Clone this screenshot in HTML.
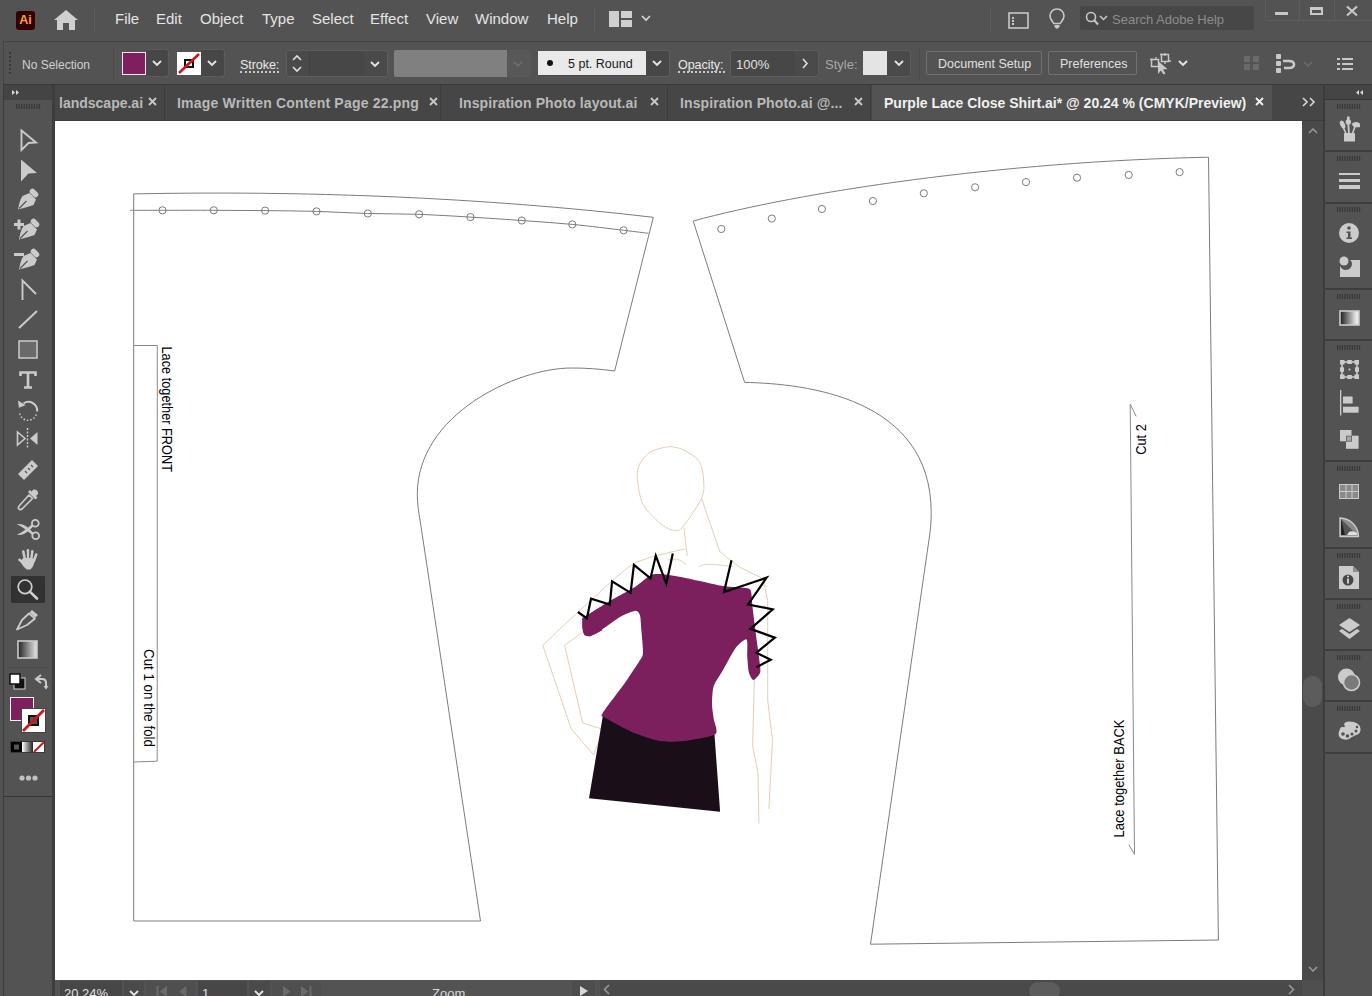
<!DOCTYPE html>
<html><head><meta charset="utf-8">
<style>
*{box-sizing:border-box;margin:0;padding:0}
html,body{width:1372px;height:996px;overflow:hidden;background:#535353;font-family:"Liberation Sans",sans-serif;color:#dcdcdc}
.a{position:absolute}
.menu span{position:absolute;top:10px;font-size:15px;color:#e4e4e4;line-height:18px}
.ctl{font-size:12px;color:#d8d8d8}
.tab{position:absolute;top:86px;height:35px;font-size:14px;font-weight:700;color:#b9b9b9;line-height:35px;white-space:nowrap}
.x{position:absolute;font-size:14px;color:#c8c8c8;top:0}
svg{position:absolute;overflow:visible}
</style></head><body>
<!-- MENU BAR -->
<div class="a" style="left:0;top:0;width:1372px;height:41px;background:#535353"></div>
<div class="a" style="left:16px;top:11px;width:19px;height:19px;background:#330000;border-radius:3px;color:#f7a04c;font-size:12.5px;font-weight:700;line-height:19px;text-align:center">Ai</div>
<svg style="left:54px;top:10px" width="24" height="20" viewBox="0 0 24 20"><path d="M12 0 L24 10 L21 10 L21 20 L15 20 L15 13 L9 13 L9 20 L3 20 L3 10 L0 10 Z" fill="#cfcfcf"/></svg>
<div class="a" style="left:94px;top:7px;width:1px;height:24px;background:#5f5f5f"></div>
<div class="menu">
<span style="left:115px">File</span><span style="left:156px">Edit</span><span style="left:200px">Object</span><span style="left:262px">Type</span><span style="left:312px">Select</span><span style="left:370px">Effect</span><span style="left:426px">View</span><span style="left:475px">Window</span><span style="left:547px">Help</span>
</div>
<div class="a" style="left:594px;top:7px;width:1px;height:24px;background:#5f5f5f"></div>

<!-- RIGHT MENU ICONS -->
<svg style="left:609px;top:11px" width="24" height="16" viewBox="0 0 24 16"><rect x="0" y="0" width="10" height="16" fill="#cfcfcf"/><rect x="12" y="0" width="11" height="7" fill="#cfcfcf"/><rect x="12" y="9" width="11" height="7" fill="#cfcfcf"/></svg>
<svg style="left:641px;top:15px" width="10" height="6" viewBox="0 0 10 6"><path d="M1 1 L5 5 L9 1" stroke="#d8d8d8" stroke-width="1.6" fill="none"/></svg>
<div class="a" style="left:990px;top:7px;width:1px;height:24px;background:#5f5f5f"></div>
<svg style="left:1008px;top:12px" width="21" height="17" viewBox="0 0 21 17"><rect x="1" y="1" width="19" height="15" stroke="#c8c8c8" stroke-width="1.6" fill="none"/><rect x="4" y="5" width="2" height="2" fill="#c8c8c8"/><rect x="4" y="8" width="2" height="2" fill="#c8c8c8"/><rect x="4" y="11" width="2" height="2" fill="#c8c8c8"/></svg>
<svg style="left:1049px;top:8px" width="16" height="22" viewBox="0 0 16 22"><path d="M8 1 C3.5 1 1 4.5 1 8 C1 11 3.5 13 4.8 15.5 L11.2 15.5 C12.5 13 15 11 15 8 C15 4.5 12.5 1 8 1 Z" stroke="#c8c8c8" stroke-width="1.6" fill="none"/><path d="M5.5 17 L10.5 17 L10.5 19 L8 21 L5.5 19 Z" fill="#c8c8c8"/></svg>
<div class="a" style="left:1080px;top:6px;width:174px;height:24px;background:#474747;border-radius:2px"></div>
<svg style="left:1085px;top:11px" width="24" height="15" viewBox="0 0 24 15"><circle cx="6" cy="6" r="4.5" stroke="#c8c8c8" stroke-width="1.6" fill="none"/><path d="M9 9 L13 13.5" stroke="#c8c8c8" stroke-width="2"/><path d="M15 5 L18.5 8.5 L22 5" stroke="#c8c8c8" stroke-width="1.5" fill="none"/></svg>
<div class="a" style="left:1112px;top:12px;font-size:13px;color:#8c8c8c;line-height:16px">Search Adobe Help</div>
<div class="a" style="left:1265px;top:-1px;width:108px;height:22px;border:1px solid #5e5e5e;border-radius:0 0 0 3px"></div>
<div class="a" style="left:1299px;top:0;width:1px;height:21px;background:#5e5e5e"></div>
<div class="a" style="left:1334px;top:0;width:1px;height:21px;background:#5e5e5e"></div>
<div class="a" style="left:1275px;top:12px;width:13px;height:3px;background:#c8c8c8"></div>
<div class="a" style="left:1310px;top:7px;width:13px;height:8px;border:2px solid #c8c8c8;border-top-width:3px"></div>
<svg style="left:1346px;top:6px" width="12" height="10" viewBox="0 0 12 10"><path d="M1 0.5 L11 9.5 M11 0.5 L1 9.5" stroke="#c8c8c8" stroke-width="2.2"/></svg>

<!-- CONTROL BAR -->
<div class="a" style="left:3px;top:41px;width:1369px;height:44px;background:#535353;border-top:1px solid #454545;border-left:1px solid #454545;border-bottom:1px solid #3a3a3a"></div>
<svg style="left:9px;top:52px" width="3" height="24" viewBox="0 0 3 24"><g fill="#3a3a3a"><rect x="0" y="0" width="2" height="2"/><rect x="0" y="4" width="2" height="2"/><rect x="0" y="8" width="2" height="2"/><rect x="0" y="12" width="2" height="2"/><rect x="0" y="16" width="2" height="2"/><rect x="0" y="20" width="2" height="2"/></g></svg>
<div class="a ctl" style="left:22px;top:58px;line-height:14px;color:#d0d0d0">No Selection</div>
<div class="a" style="left:113px;top:48px;width:1px;height:32px;background:#4a4a4a"></div>
<!-- fill -->
<div class="a" style="left:146px;top:50px;width:22px;height:26px;background:#474747;border-radius:0 2px 2px 0"></div>
<div class="a" style="left:122px;top:52px;width:24px;height:23px;background:#7f1f5e;border:1px solid #f4e4ee"></div>
<svg style="left:152px;top:60px" width="10" height="6" viewBox="0 0 10 6"><path d="M1 1 L5 5 L9 1" stroke="#e4e4e4" stroke-width="1.9" fill="none"/></svg>
<!-- stroke -->
<div class="a" style="left:201px;top:50px;width:23px;height:26px;background:#474747;border-radius:0 2px 2px 0"></div>
<div class="a" style="left:177px;top:52px;width:24px;height:23px;background:#fff"></div>
<svg style="left:177px;top:52px" width="24" height="23" viewBox="0 0 24 23"><rect x="8" y="8" width="8" height="7" stroke="#111" stroke-width="2" fill="none"/><path d="M2 21 L22 2" stroke="#d0141b" stroke-width="2.6"/></svg>
<svg style="left:207px;top:60px" width="10" height="6" viewBox="0 0 10 6"><path d="M1 1 L5 5 L9 1" stroke="#e4e4e4" stroke-width="1.9" fill="none"/></svg>
<div class="a ctl" style="left:240px;top:58px;font-size:12.6px;line-height:14px;color:#e8e8e8;letter-spacing:-0.1px">Stroke:</div>
<div class="a" style="left:240px;top:71px;width:39px;height:2px;border-top:2px dotted #c8c8c8"></div>
<!-- stroke weight -->
<div class="a" style="left:287px;top:51px;width:100px;height:25px;background:#4a4a4a;border-radius:2px"></div>
<div class="a" style="left:309px;top:51px;width:55px;height:25px;background:#474747"></div>
<div class="a" style="left:309px;top:51px;width:1px;height:25px;background:#424242"></div>
<svg style="left:291px;top:54px" width="12" height="19" viewBox="0 0 12 19"><path d="M2 6 L6 2 L10 6 M2 13 L6 17 L10 13" stroke="#e0e0e0" stroke-width="1.6" fill="none"/></svg>
<svg style="left:370px;top:61px" width="10" height="6" viewBox="0 0 10 6"><path d="M1 1 L5 5 L9 1" stroke="#e4e4e4" stroke-width="1.9" fill="none"/></svg>
<!-- profile -->
<div class="a" style="left:394px;top:50px;width:137px;height:27px;background:#585858;border-radius:2px"></div>
<div class="a" style="left:394px;top:50px;width:113px;height:27px;background:#808080;border-radius:2px 0 0 2px"></div>
<svg style="left:513px;top:61px" width="10" height="6" viewBox="0 0 10 6"><path d="M1 1 L5 5 L9 1" stroke="#6e6e6e" stroke-width="1.6" fill="none"/></svg>
<!-- brush -->
<div class="a" style="left:538px;top:51px;width:131px;height:25px;background:#474747;border-radius:2px"></div>
<div class="a" style="left:538px;top:51px;width:108px;height:24px;background:#e9e9e9"></div>
<div class="a" style="left:547px;top:60px;width:6px;height:6px;border-radius:50%;background:#111"></div>
<div class="a" style="left:568px;top:57px;font-size:12.5px;line-height:14px;color:#1a1a1a">5 pt. Round</div>
<svg style="left:652px;top:60px" width="10" height="6" viewBox="0 0 10 6"><path d="M1 1 L5 5 L9 1" stroke="#e4e4e4" stroke-width="1.9" fill="none"/></svg>
<!-- opacity -->
<div class="a ctl" style="left:678px;top:58px;font-size:12.6px;line-height:14px;color:#e8e8e8;letter-spacing:-0.1px">Opacity:</div>
<div class="a" style="left:678px;top:71px;width:47px;height:2px;border-top:2px dotted #c8c8c8"></div>
<div class="a" style="left:731px;top:51px;width:87px;height:25px;background:#4a4a4a;border-radius:2px"></div>
<div class="a" style="left:731px;top:51px;width:64px;height:25px;background:#474747"></div>
<div class="a ctl" style="left:736px;top:58px;font-size:13px;line-height:14px;color:#e0e0e0">100%</div>
<svg style="left:802px;top:58px" width="6" height="11" viewBox="0 0 6 11"><path d="M1 1 L5 5.5 L1 10" stroke="#e0e0e0" stroke-width="1.6" fill="none"/></svg>
<div class="a ctl" style="left:825px;top:58px;font-size:13px;line-height:14px;color:#a8a8a8">Style:</div>
<div class="a" style="left:887px;top:51px;width:24px;height:25px;background:#4a4a4a;border-radius:0 2px 2px 0"></div>
<div class="a" style="left:863px;top:51px;width:24px;height:24px;background:#e4e4e4"></div>
<svg style="left:894px;top:60px" width="10" height="6" viewBox="0 0 10 6"><path d="M1 1 L5 5 L9 1" stroke="#e4e4e4" stroke-width="1.9" fill="none"/></svg>
<div class="a" style="left:919px;top:48px;width:1px;height:32px;background:#4a4a4a"></div>
<div class="a" style="left:926px;top:51px;width:116px;height:24px;border:1px solid #707070;border-radius:2px"></div>
<div class="a ctl" style="left:938px;top:57px;font-size:12.5px;line-height:14px;color:#e0e0e0">Document Setup</div>
<div class="a" style="left:1048px;top:51px;width:89px;height:24px;border:1px solid #707070;border-radius:2px"></div>
<div class="a ctl" style="left:1060px;top:57px;font-size:12.5px;line-height:14px;color:#e0e0e0">Preferences</div>


<div class="a" style="left:286px;top:50px;width:102px;height:27px;border:1px solid #5c5c5c;border-radius:3px"></div>
<div class="a" style="left:730px;top:50px;width:89px;height:27px;border:1px solid #5c5c5c;border-radius:3px"></div>
<div class="a" style="left:645px;top:50px;width:25px;height:27px;border:1px solid #5c5c5c;border-left:none;border-radius:0 3px 3px 0"></div>
<div class="a" style="left:146px;top:49px;width:23px;height:28px;border:1px solid #5c5c5c;border-left:none;border-radius:0 3px 3px 0"></div>
<div class="a" style="left:201px;top:49px;width:24px;height:28px;border:1px solid #5c5c5c;border-left:none;border-radius:0 3px 3px 0"></div>
<div class="a" style="left:887px;top:50px;width:24px;height:27px;border:1px solid #5c5c5c;border-left:none;border-radius:0 3px 3px 0"></div>
<!-- right icons control bar -->
<svg style="left:1150px;top:53px" width="22" height="22" viewBox="0 0 22 22"><rect x="1.5" y="6.5" width="7" height="7" stroke="#c8c8c8" stroke-width="1.5" fill="none"/><rect x="11.5" y="1.5" width="7" height="7" stroke="#c8c8c8" stroke-width="1.5" fill="none"/><path d="M0 6.5 L3 6.5 M6 4 L6 7 M10 1.5 L13 1.5 M15 0 L15 3 M18.5 8 L21 8 M15 8 L15 11" stroke="#c8c8c8" stroke-width="1.3"/><path d="M8 8 L8 21 L11 17.5 L13.5 21.5 L15.5 20.5 L13 16.5 L17.5 16 Z" fill="#c8c8c8"/></svg>
<svg style="left:1178px;top:60px" width="10" height="6" viewBox="0 0 10 6"><path d="M1 1 L5 5 L9 1" stroke="#e4e4e4" stroke-width="1.9" fill="none"/></svg>
<svg style="left:1243px;top:55px" width="17" height="16" viewBox="0 0 17 16"><g fill="#6a6a6a"><rect x="1" y="1" width="6" height="6"/><rect x="10" y="1" width="6" height="6"/><rect x="1" y="9" width="6" height="6"/><rect x="10" y="9" width="6" height="6"/></g><path d="M8.5 0 L8.5 16 M0 8 L17 8" stroke="#575757" stroke-width="1.2"/></svg>
<svg style="left:1276px;top:54px" width="20" height="19" viewBox="0 0 20 19"><g fill="#c8c8c8"><rect x="0" y="0" width="5" height="5" rx="1"/><rect x="0" y="7" width="5" height="5" rx="1"/><rect x="0" y="14" width="5" height="5" rx="1"/></g><path d="M7 7 L13 7 C17 7 18 9 18 10.5 C18 12 17 14 13 14 L8 14" stroke="#c8c8c8" stroke-width="2.6" fill="none"/></svg>
<svg style="left:1303px;top:61px" width="10" height="6" viewBox="0 0 10 6"><path d="M1 1 L5 5 L9 1" stroke="#6e6e6e" stroke-width="1.5" fill="none"/></svg>
<svg style="left:1337px;top:58px" width="16" height="12" viewBox="0 0 16 12"><g fill="#c8c8c8"><rect x="0" y="0" width="3" height="2"/><rect x="5" y="0" width="11" height="2"/><rect x="0" y="5" width="3" height="2"/><rect x="5" y="5" width="11" height="2"/><rect x="0" y="10" width="3" height="2"/><rect x="5" y="10" width="11" height="2"/></g></svg>

<!-- TAB BAR -->
<div class="a" style="left:55px;top:85px;width:1268px;height:36px;background:#464646"></div>
<div class="a" style="left:164px;top:85px;width:1px;height:36px;background:#3c3c3c"></div>
<div class="a" style="left:440px;top:85px;width:1px;height:36px;background:#3c3c3c"></div>
<div class="a" style="left:667px;top:85px;width:1px;height:36px;background:#3c3c3c"></div>
<div class="a" style="left:870px;top:85px;width:1px;height:36px;background:#3c3c3c"></div>
<div class="a" style="left:872px;top:85px;width:400px;height:35px;background:#535353"></div>
<div class="tab" style="left:59px">landscape.ai</div>
<div class="tab" style="left:177px;letter-spacing:0.2px">Image Written Content Page 22.png</div>
<div class="tab" style="left:459px;letter-spacing:0.1px">Inspiration Photo layout.ai</div>
<div class="tab" style="left:680px;letter-spacing:0.1px">Inspiration Photo.ai @...</div>
<div class="tab" style="left:884px;color:#f0f0f0">Purple Lace Close Shirt.ai* @ 20.24 % (CMYK/Preview)</div>
<svg style="left:148px;top:97px" width="9" height="9" viewBox="0 0 9 9"><path d="M1 1 L8 8 M8 1 L1 8" stroke="#c8c8c8" stroke-width="1.8"/></svg>
<svg style="left:429px;top:97px" width="9" height="9" viewBox="0 0 9 9"><path d="M1 1 L8 8 M8 1 L1 8" stroke="#c8c8c8" stroke-width="1.8"/></svg>
<svg style="left:650px;top:97px" width="9" height="9" viewBox="0 0 9 9"><path d="M1 1 L8 8 M8 1 L1 8" stroke="#c8c8c8" stroke-width="1.8"/></svg>
<svg style="left:854px;top:97px" width="9" height="9" viewBox="0 0 9 9"><path d="M1 1 L8 8 M8 1 L1 8" stroke="#c8c8c8" stroke-width="1.8"/></svg>
<svg style="left:1255px;top:97px" width="9" height="9" viewBox="0 0 9 9"><path d="M1 1 L8 8 M8 1 L1 8" stroke="#f0f0f0" stroke-width="1.8"/></svg>
<svg style="left:1302px;top:97px" width="14" height="10" viewBox="0 0 14 10"><path d="M1 1 L5 5 L1 9 M8 1 L12 5 L8 9" stroke="#d8d8d8" stroke-width="1.6" fill="none"/></svg>

<div class="a" style="left:55px;top:120px;width:1268px;height:1px;background:#3d3d3d"></div>
<!-- LEFT TOOLBAR -->
<div class="a" style="left:0;top:85px;width:3px;height:911px;background:#535353"></div>
<div class="a" style="left:3px;top:85px;width:1px;height:911px;background:#3c3c3c"></div>
<div class="a" style="left:4px;top:85px;width:48px;height:15px;background:#444444"></div>
<svg style="left:12px;top:90px" width="8" height="5" viewBox="0 0 8 5"><path d="M0 0 L3 2.5 L0 5 Z M4 0 L7 2.5 L4 5 Z" fill="#d8d8d8"/></svg>
<div class="a" style="left:4px;top:100px;width:48px;height:896px;background:#535353"></div>
<div class="a" style="left:52px;top:85px;width:3px;height:911px;background:#3e3e3e"></div>
<div class="a" style="left:4px;top:796px;width:48px;height:1px;background:#363636"></div>

<!-- TOOLS -->
<svg style="left:15.5px;top:104px" width="25" height="5" viewBox="0 0 25 5"><g fill="#363636"><rect x="0.00" y="0" width="1.1" height="5"/><rect x="2.55" y="0" width="1.1" height="5"/><rect x="5.10" y="0" width="1.1" height="5"/><rect x="7.65" y="0" width="1.1" height="5"/><rect x="10.20" y="0" width="1.1" height="5"/><rect x="12.75" y="0" width="1.1" height="5"/><rect x="15.30" y="0" width="1.1" height="5"/><rect x="17.85" y="0" width="1.1" height="5"/><rect x="20.40" y="0" width="1.1" height="5"/><rect x="22.95" y="0" width="1.1" height="5"/></g></svg>
<svg style="left:20px;top:129px" width="18" height="23" viewBox="0 0 18 23"><path d="M1.5 1.5 L16 13.5 L8.5 14 L1.5 21 Z" stroke="#cbcbcb" stroke-width="1.9" fill="none" stroke-linejoin="miter"/></svg>
<svg style="left:20px;top:159px" width="18" height="23" viewBox="0 0 18 23"><path d="M1 0.5 L17 14 L8.5 14.5 L1 22.5 Z" fill="#cbcbcb"/></svg>
<svg style="left:17px;top:188px" width="23" height="23" viewBox="0 0 23 23"><g transform="translate(0,0)"><path d="M15.5 3.5 L18.5 6.5" stroke="#cbcbcb" stroke-width="5.5" stroke-linecap="round"/><path d="M12.5 5 L19 11.5 L16.5 17 Q10 19.5 1 21.5 Q2.5 12.5 5.5 8 Z" fill="#cbcbcb"/><path d="M2 20.5 L9.5 13" stroke="#535353" stroke-width="1.1"/></g></svg>
<svg style="left:13px;top:218px" width="28" height="23" viewBox="0 0 28 23"><path d="M6 1.5 L6 11.5 M1 6.5 L11 6.5" stroke="#cbcbcb" stroke-width="3"/><g transform="translate(5,0)"><path d="M15.5 3.5 L18.5 6.5" stroke="#cbcbcb" stroke-width="5.5" stroke-linecap="round"/><path d="M12.5 5 L19 11.5 L16.5 17 Q10 19.5 1 21.5 Q2.5 12.5 5.5 8 Z" fill="#cbcbcb"/><path d="M2 20.5 L9.5 13" stroke="#535353" stroke-width="1.1"/></g></svg>
<svg style="left:13px;top:248px" width="28" height="23" viewBox="0 0 28 23"><path d="M1 6.5 L11 6.5" stroke="#cbcbcb" stroke-width="3"/><g transform="translate(5,0)"><path d="M15.5 3.5 L18.5 6.5" stroke="#cbcbcb" stroke-width="5.5" stroke-linecap="round"/><path d="M12.5 5 L19 11.5 L16.5 17 Q10 19.5 1 21.5 Q2.5 12.5 5.5 8 Z" fill="#cbcbcb"/><path d="M2 20.5 L9.5 13" stroke="#535353" stroke-width="1.1"/></g></svg>
<svg style="left:21px;top:279px" width="16" height="22" viewBox="0 0 16 22"><path d="M1.5 21 L1.5 1.5 L15 15" stroke="#cbcbcb" stroke-width="1.9" fill="none"/></svg>
<svg style="left:18px;top:310px" width="20" height="19" viewBox="0 0 20 19"><path d="M1 18 L19 1" stroke="#cbcbcb" stroke-width="2"/></svg>
<svg style="left:18px;top:340px" width="20" height="19" viewBox="0 0 20 19"><rect x="1" y="1" width="18" height="17" fill="#6a6a6a" stroke="#cbcbcb" stroke-width="1.5"/></svg>
<svg style="left:19px;top:371px" width="18" height="18" viewBox="0 0 18 18"><path d="M1.5 5 L1.5 1.5 L16.5 1.5 L16.5 5 M9 1.5 L9 16.5 M5 16.5 L13 16.5" stroke="#cbcbcb" stroke-width="2.6" fill="none"/></svg>
<svg style="left:17px;top:398px" width="22" height="23" viewBox="0 0 22 23"><path d="M6.5 5.5 A8.7 8.7 0 0 1 20.1 13.5" stroke="#cbcbcb" stroke-width="2" fill="none"/><path d="M19.3 16.6 A8.7 8.7 0 0 1 2.6 15.2" stroke="#cbcbcb" stroke-width="1.5" fill="none" stroke-dasharray="1.5 1.9"/><path d="M1 2.4 L1.9 9.7 L8.6 7.2 Z" fill="#cbcbcb"/></svg>
<svg style="left:16px;top:428px" width="23" height="21" viewBox="0 0 23 21"><path d="M1.5 4 L9 10.5 L1.5 17 Z" stroke="#cbcbcb" stroke-width="1.6" fill="none"/><path d="M21.5 4 L14 10.5 L21.5 17 Z" fill="#cbcbcb"/><path d="M11.5 0 L11.5 21" stroke="#cbcbcb" stroke-width="1.4" stroke-dasharray="2 1.5"/></svg>
<svg style="left:17px;top:459px" width="22" height="21" viewBox="0 0 22 21"><path d="M15 1 L21 7 L7 21 L1 15 Z" fill="#cbcbcb"/><path d="M8 12 L10 14 M11 9 L13 11 M14 6 L16 8" stroke="#535353" stroke-width="1.2"/></svg>
<svg style="left:17px;top:489px" width="22" height="22" viewBox="0 0 22 22"><path d="M16.5 0.5 Q18.5 0 20 1.5 Q21.5 3 21 5 L19 7 L20.5 8.5 L18.5 10.5 L11 3 L13 1 L14.5 2.5 Z" fill="#cbcbcb"/><path d="M12 6 L15.5 9.5 L5.5 19.5 Q3.5 21 2.5 20.5 L1.5 19.5 Q1 18.5 2.5 16.5 Z" stroke="#cbcbcb" stroke-width="1.7" fill="none" stroke-linejoin="round"/></svg>
<svg style="left:17px;top:519px" width="23" height="21" viewBox="0 0 23 21"><circle cx="18.3" cy="4.3" r="3.4" stroke="#cbcbcb" stroke-width="1.8" fill="none"/><circle cx="18.7" cy="16.8" r="3.4" stroke="#cbcbcb" stroke-width="1.8" fill="none"/><path d="M0 5.2 C5 4 10 6.5 16.5 14 L15 15.8 C10 11.5 5 7.5 0 5.2 Z" fill="#cbcbcb"/><path d="M0 15.6 C5 16.8 10 14.5 16.5 7 L15 5.2 C10 9.5 5 13.5 0 15.6 Z" fill="#cbcbcb"/></svg>
<svg style="left:17px;top:548px" width="22" height="23" viewBox="0 0 22 23"><path d="M6 10 L17.5 10 Q17.8 18 13.5 21.5 L10 21.5 Q7 20 3.5 14 Z" fill="#cbcbcb"/><g stroke="#cbcbcb" stroke-width="2.6" stroke-linecap="round"><path d="M6.3 3.5 L8 11.5"/><path d="M10.9 2.3 L11 11.5"/><path d="M15.3 3.4 L14.3 11.5"/><path d="M19.2 6.5 L16.8 13"/><path d="M2.5 11.8 L7 15.5"/></g><g stroke="#535353" stroke-width="0.7"><path d="M8.9 4 L9.5 10"/><path d="M13 4 L12.6 10"/><path d="M17.3 6 L15.8 10.5"/></g></svg>
<div class="a" style="left:11px;top:576px;width:34px;height:27px;background:#323232;border-radius:1px"></div>
<svg style="left:17px;top:579px" width="22" height="22" viewBox="0 0 22 22"><circle cx="8" cy="7.8" r="6.8" stroke="#d0d0d0" stroke-width="1.7" fill="none"/><path d="M12.8 12.6 L20 19.5" stroke="#d0d0d0" stroke-width="2.6" stroke-linecap="round"/></svg>
<svg style="left:16px;top:609px" width="23" height="21" viewBox="0 0 23 21"><path d="M16 1 L22 6 L19.5 8.5 L13.5 3.5 Z" fill="#cbcbcb"/><path d="M13 4.5 L19 9.5 L11 16 L1 20.5 L6 11 Z" stroke="#cbcbcb" stroke-width="1.8" fill="none" stroke-linejoin="round"/></svg>
<svg style="left:17px;top:640px" width="21" height="19" viewBox="0 0 21 19"><defs><linearGradient id="g1" x1="0" x2="1"><stop offset="0" stop-color="#222"/><stop offset="1" stop-color="#e8e8e8"/></linearGradient></defs><rect x="1" y="1" width="19" height="17" fill="url(#g1)" stroke="#cbcbcb" stroke-width="1.6"/></svg>
<div class="a" style="left:9px;top:667px;width:39px;height:1px;background:#4c4c4c"></div>
<svg style="left:9px;top:673px" width="17" height="17" viewBox="0 0 17 17"><rect x="5" y="5" width="11" height="11" fill="#111" stroke="#bbb" stroke-width="1.2"/><rect x="1" y="1" width="10" height="10" fill="#fff" stroke="#111" stroke-width="1.5"/></svg>
<svg style="left:35px;top:674px" width="14" height="16" viewBox="0 0 14 16"><path d="M6 1 L1 5 L6 9 M1.5 5 L7 5 Q11 5 11 9 L11 14" stroke="#cbcbcb" stroke-width="2" fill="none"/><path d="M8.5 12 L11 15.5 L13.5 12 Z" fill="#cbcbcb"/></svg>
<div class="a" style="left:10px;top:697px;width:24px;height:24px;background:#7f1f5e;border:1.5px solid #f0f0f0"></div>
<div class="a" style="left:21px;top:708px;width:25px;height:25px;background:#fff;border:1px solid #444"></div>
<svg style="left:21px;top:708px" width="25" height="25" viewBox="0 0 25 25"><rect x="8" y="8" width="9" height="9" fill="#555" stroke="#111" stroke-width="2"/><path d="M2 23 L23 2" stroke="#d0141b" stroke-width="2.8"/></svg>
<svg style="left:10px;top:741px" width="35" height="12" viewBox="0 0 35 12"><defs><linearGradient id="g2" x1="0" x2="1"><stop offset="0" stop-color="#fff"/><stop offset="1" stop-color="#222"/></linearGradient></defs><rect x="0" y="0" width="35" height="12" fill="#3a3a3a"/><rect x="1" y="1" width="11" height="10" fill="#000"/><rect x="4" y="3.5" width="5" height="5" fill="#555"/><rect x="12" y="1" width="11" height="10" fill="url(#g2)"/><rect x="23" y="1" width="11" height="10" fill="#fff"/><path d="M24 11 L34 1" stroke="#d0141b" stroke-width="2"/></svg>
<svg style="left:19px;top:775px" width="19" height="6" viewBox="0 0 19 6"><circle cx="3" cy="3" r="2.6" fill="#c0c0c0"/><circle cx="9.5" cy="3" r="2.6" fill="#c0c0c0"/><circle cx="16" cy="3" r="2.6" fill="#c0c0c0"/></svg>

<!-- CANVAS -->
<div class="a" style="left:55px;top:121px;width:1247px;height:859px;background:#fff"></div>
<!-- DRAWING -->
<svg class="a" style="left:0;top:0" width="1372" height="996" viewBox="0 0 1372 996">
<defs><clipPath id="cv"><rect x="55" y="121" width="1247" height="859"/></clipPath></defs><g clip-path="url(#cv)">
<path d="M133.7,193.9 C300,190.5 480,197 653.3,217.3 L614.6,371.1 C600,368.8 585,368 571.5,368 C516.6,368 417.3,414.5 417.3,494.2 C417.3,504 418.8,513 420.5,523 L480.5,921 L133.7,921 Z" fill="none" stroke="#7c7c7c" stroke-width="1"/>
<path d="M130.2,210.3 C135.6,210.3 148.6,210.3 162.5,210.3 C176.4,210.3 196.7,210.2 213.8,210.3 C230.9,210.4 248.0,210.4 265.1,210.6 C282.2,210.8 299.4,210.9 316.5,211.4 C333.6,211.9 350.7,213.0 367.8,213.5 C384.9,214.0 402.0,213.7 419.1,214.3 C436.2,214.9 453.3,216.1 470.4,217.1 C487.5,218.1 504.8,219.3 521.8,220.5 C538.8,221.7 555.3,222.8 572.3,224.4 C589.3,226.0 610.9,228.8 623.6,230.3 C636.3,231.8 644.4,232.8 648.5,233.3" fill="none" stroke="#7c7c7c" stroke-width="1"/>
<circle cx="162.5" cy="210.3" r="3.6" fill="none" stroke="#7c7c7c" stroke-width="1"/>
<circle cx="213.8" cy="210.3" r="3.6" fill="none" stroke="#7c7c7c" stroke-width="1"/>
<circle cx="265.1" cy="210.6" r="3.6" fill="none" stroke="#7c7c7c" stroke-width="1"/>
<circle cx="316.5" cy="211.4" r="3.6" fill="none" stroke="#7c7c7c" stroke-width="1"/>
<circle cx="367.8" cy="213.5" r="3.6" fill="none" stroke="#7c7c7c" stroke-width="1"/>
<circle cx="419.1" cy="214.3" r="3.6" fill="none" stroke="#7c7c7c" stroke-width="1"/>
<circle cx="470.4" cy="217.1" r="3.6" fill="none" stroke="#7c7c7c" stroke-width="1"/>
<circle cx="521.8" cy="220.5" r="3.6" fill="none" stroke="#7c7c7c" stroke-width="1"/>
<circle cx="572.3" cy="224.4" r="3.6" fill="none" stroke="#7c7c7c" stroke-width="1"/>
<circle cx="623.6" cy="230.3" r="3.6" fill="none" stroke="#7c7c7c" stroke-width="1"/>
<path d="M133.7,345.5 L157.3,345.5 L157.2,761.2 L133.7,762" fill="none" stroke="#8a8a8a" stroke-width="1"/>
<path d="M693.2,221 C800,192 1000,161.5 1208.5,157.2 L1218.4,940 L870.5,944.2 L929.7,534.9 C930.8,527 931.2,520 931.2,512.8 C931.2,397.6 805.8,383.6 744.6,382.4 Z" fill="none" stroke="#7c7c7c" stroke-width="1"/>
<circle cx="721.3" cy="229" r="3.6" fill="none" stroke="#7c7c7c" stroke-width="1"/>
<circle cx="771.8" cy="218.6" r="3.6" fill="none" stroke="#7c7c7c" stroke-width="1"/>
<circle cx="821.9" cy="209" r="3.6" fill="none" stroke="#7c7c7c" stroke-width="1"/>
<circle cx="872.9" cy="201" r="3.6" fill="none" stroke="#7c7c7c" stroke-width="1"/>
<circle cx="923.8" cy="193.3" r="3.6" fill="none" stroke="#7c7c7c" stroke-width="1"/>
<circle cx="975.1" cy="187.3" r="3.6" fill="none" stroke="#7c7c7c" stroke-width="1"/>
<circle cx="1026" cy="182.1" r="3.6" fill="none" stroke="#7c7c7c" stroke-width="1"/>
<circle cx="1077" cy="177.7" r="3.6" fill="none" stroke="#7c7c7c" stroke-width="1"/>
<circle cx="1128.7" cy="174.9" r="3.6" fill="none" stroke="#7c7c7c" stroke-width="1"/>
<circle cx="1179.6" cy="172.1" r="3.6" fill="none" stroke="#7c7c7c" stroke-width="1"/>
<path d="M1136.2,416.4 L1130.2,404.1 L1134.5,854.4 L1128.9,844.8" fill="none" stroke="#8a8a8a" stroke-width="1"/>
<path d="M666.4,447.0 C661.2,447.9 652.9,449.9 648.1,453.8 C643.3,457.7 639.0,463.4 637.6,470.1 C636.2,476.8 638.4,487.7 639.7,494.0 C641.0,500.3 641.5,502.9 645.3,508.0 C649.0,513.1 657.3,521.1 662.2,524.9 C667.1,528.6 671.3,530.3 674.8,530.5 C678.3,530.7 678.8,531.7 683.2,526.3 C687.7,520.9 698.1,505.9 701.5,498.2 C704.9,490.5 703.8,485.9 703.6,480.0 C703.4,474.1 702.3,467.5 700.1,463.1 C697.9,458.7 693.8,456.3 690.3,453.8 C686.8,451.3 683.0,449.3 679.0,448.2 C675.0,447.1 671.5,446.1 666.4,447.0 Z" fill="none" stroke="#e4d0b4" stroke-width="1"/>
<path d="M683.9,527.7 L687.2,555.8" fill="none" stroke="#e4d0b4" stroke-width="1"/>
<path d="M701.5,498.2 L719.8,551.6 L739.4,567.1 L762.8,578.6 L767.7,600.2 L767.7,700.0 L772.5,740.4 L768.9,809.0" fill="none" stroke="#e4d0b4" stroke-width="1"/>
<path d="M684.6,548.8 C677.6,550.7 653.3,555.8 642.5,560.0 C631.7,564.2 633.8,562.6 620.0,574.1 C606.2,585.6 570.0,619.7 560.0,628.8" fill="none" stroke="#e4d0b4" stroke-width="1"/>
<path d="M560.0,628.8 L542.8,645.4 L571.4,729.3 L593.6,754.8 L602.6,731.3" fill="none" stroke="#e4d0b4" stroke-width="1"/>
<path d="M582.7,631.9 L564.6,645.4 L582.7,723.0 L602.8,729.3" fill="none" stroke="#e4d0b4" stroke-width="1"/>
<path d="M667.8,560.0 C669.4,559.9 674.6,558.6 677.6,559.3 C680.6,560.0 684.6,563.5 686.0,564.3" fill="none" stroke="#e4d0b4" stroke-width="1"/>
<path d="M698.7,567.1 C700.1,566.6 701.5,564.4 707.1,564.3 C712.7,564.2 728.2,566.0 732.4,566.4" fill="none" stroke="#e4d0b4" stroke-width="1"/>
<path d="M753.4,672.5 L754.4,679.0 L752.6,745.8 L758.0,772.9 L758.9,823.5" fill="none" stroke="#e4d0b4" stroke-width="1"/>
<path d="M603.5,712 C620,722 650,736 680,736 C695,736 705,733 714,728 L720.1,811.8 L589,798.2 Z" fill="#1a0f18"/>
<path d="M584.0,617.5 C587.2,615.3 603.8,604.6 609.8,601.0 C615.8,597.4 630.3,589.8 635.4,586.7 C640.5,583.6 648.2,575.4 653.5,574.3 C658.8,573.2 672.5,575.5 680.6,576.9 C688.7,578.3 715.5,584.7 723.3,586.0 C731.1,587.3 744.1,587.5 747.3,588.2 C750.5,588.9 750.5,589.7 751.1,592.0 C751.7,594.3 752.0,602.4 752.6,607.8 C753.2,613.2 755.6,631.8 756.4,637.9 C757.2,644.0 759.0,656.5 759.4,660.5 C759.8,664.5 760.9,670.2 760.2,672.5 C759.5,674.8 754.7,680.0 753.4,680.0 C752.1,680.0 749.6,675.1 748.9,672.5 C748.2,669.9 747.6,661.4 747.3,657.5 C747.0,653.6 748.0,640.5 746.6,639.4 C745.2,638.3 738.0,644.9 735.3,648.4 C732.6,651.9 725.8,665.1 723.3,669.5 C720.8,673.9 715.0,682.1 713.7,686.1 C712.4,690.1 712.0,700.4 712.0,704.2 C712.0,708.0 713.3,715.2 713.7,718.7 C714.1,722.2 718.6,731.5 715.6,734.0 C712.6,736.5 694.7,739.5 688.4,740.4 C682.1,741.3 667.6,742.2 661.3,741.3 C655.0,740.4 640.7,735.8 634.2,733.1 C627.7,730.4 609.0,720.1 605.3,717.8 C601.6,715.5 600.3,717.4 602.6,713.3 C604.9,709.2 620.9,688.6 625.2,682.5 C629.5,676.4 637.5,664.2 639.6,660.8 C641.7,657.4 642.8,656.5 643.0,653.0 C643.2,649.5 641.8,634.8 641.4,630.4 C641.0,626.0 640.7,617.6 640.0,615.3 C639.3,613.0 637.7,610.6 635.4,610.8 C633.1,611.0 624.8,614.3 620.4,616.8 C616.0,619.3 601.5,630.3 597.8,632.6 C594.1,634.9 590.3,636.0 588.7,636.2 C587.1,636.4 584.7,635.5 584.0,634.5 C583.3,633.5 582.5,629.7 582.3,628.0 C582.1,626.3 582.1,621.2 582.3,620.0 C582.5,618.8 580.8,619.7 584.0,617.5 Z" fill="#7b1f5d"/>
<path d="M582.3,618.0 L600.0,607.5 L602.0,630.5 L590.0,636.6 L584.3,634.2 Z" fill="#7b1f5d"/>
<path d="M577.9,612.0 L586.9,618.3 L591.0,598.7 L609.8,604.5 L612.1,581.4 L630.6,593.0 L633.9,564.8 L650.5,578.4 L655.8,555.8 L666.3,583.7 L672.8,553.6" fill="none" stroke="#000" stroke-width="2.2" stroke-linejoin="miter" stroke-miterlimit="10"/>
<path d="M731.5,560.3 L724.0,592.0 L766.6,577.7 L748.1,604.5 L772.7,609.3 L750.4,628.9 L774.8,637.6 L756.4,652.7 L770.7,659.7 L756.4,667.3" fill="none" stroke="#000" stroke-width="2.2" stroke-linejoin="miter" stroke-miterlimit="10"/>
</g>
<g font-family="Liberation Sans" font-size="14.5" fill="#000">
<text transform="translate(161.6,346.5) rotate(90)" textLength="125.5" lengthAdjust="spacingAndGlyphs">Lace together FRONT</text>
<text transform="translate(144.2,649) rotate(90)" textLength="98" lengthAdjust="spacingAndGlyphs">Cut 1 on the fold</text>
<text transform="translate(1146,454.7) rotate(-90)" textLength="30.5" lengthAdjust="spacingAndGlyphs">Cut 2</text>
<text transform="translate(1124.3,837.5) rotate(-90)" textLength="118" lengthAdjust="spacingAndGlyphs">Lace together BACK</text>
</g>
</svg>
<!-- /DRAWING -->
<!-- v scrollbar -->
<div class="a" style="left:1302px;top:121px;width:21px;height:859px;background:#4a4a4a"></div>
<svg style="left:1308px;top:128px" width="10" height="6" viewBox="0 0 10 6"><path d="M1 5 L5 1 L9 5" stroke="#9a9a9a" stroke-width="1.5" fill="none"/></svg>
<svg style="left:1308px;top:966px" width="10" height="6" viewBox="0 0 10 6"><path d="M1 1 L5 5 L9 1" stroke="#9a9a9a" stroke-width="1.5" fill="none"/></svg>
<div class="a" style="left:1303px;top:676px;width:19px;height:31px;background:#5c5c5c;border-radius:9px"></div>
<!-- status bar -->
<div class="a" style="left:55px;top:980px;width:1268px;height:16px;background:#535353"></div>
<div class="a" style="left:600px;top:980px;width:702px;height:16px;background:#4a4a4a"></div>
<div class="a" style="left:1302px;top:980px;width:21px;height:16px;background:#4f4f4f"></div>
<div class="a" style="left:1029px;top:982px;width:31px;height:18px;background:#5c5c5c;border-radius:9px"></div>
<svg style="left:1288px;top:984px" width="7" height="11" viewBox="0 0 7 11"><path d="M1 1 L5.5 5.5 L1 10" stroke="#9a9a9a" stroke-width="1.5" fill="none"/></svg>
<svg style="left:603px;top:984px" width="7" height="11" viewBox="0 0 7 11"><path d="M6 1 L1.5 5.5 L6 10" stroke="#9a9a9a" stroke-width="1.5" fill="none"/></svg>
<div class="a" style="left:60px;top:981px;width:62px;height:16px;background:#474747"></div>
<div class="a" style="left:124px;top:981px;width:20px;height:16px;background:#4a4a4a"></div>
<div class="a" style="left:64px;top:986px;font-size:13px;line-height:15px;color:#e0e0e0">20.24%</div>
<svg style="left:129px;top:990px" width="10" height="6" viewBox="0 0 10 6"><path d="M1 1 L5 5 L9 1" stroke="#e4e4e4" stroke-width="1.9" fill="none"/></svg>
<div class="a" style="left:146px;top:981px;width:49px;height:16px;background:#4f4f4f"></div>
<svg style="left:156px;top:986px" width="32" height="11" viewBox="0 0 32 11"><path d="M0.5 0 L2.5 0 L2.5 11 L0.5 11 Z M11 0 L3.5 5.5 L11 11 Z M30.5 0 L23 5.5 L30.5 11 Z" fill="#6a6a6a"/></svg>
<div class="a" style="left:198px;top:981px;width:49px;height:16px;background:#474747"></div>
<div class="a" style="left:202px;top:986px;font-size:13px;line-height:15px;color:#e0e0e0">1</div>
<div class="a" style="left:249px;top:981px;width:21px;height:16px;background:#4a4a4a"></div>
<svg style="left:254px;top:990px" width="10" height="6" viewBox="0 0 10 6"><path d="M1 1 L5 5 L9 1" stroke="#e4e4e4" stroke-width="1.9" fill="none"/></svg>
<div class="a" style="left:272px;top:981px;width:49px;height:16px;background:#4f4f4f"></div>
<svg style="left:283px;top:986px" width="30" height="11" viewBox="0 0 30 11"><path d="M0 0 L7.5 5.5 L0 11 Z M18 0 L25.5 5.5 L18 11 Z M26.5 0 L28.5 0 L28.5 11 L26.5 11 Z" fill="#6a6a6a"/></svg>
<div class="a" style="left:432px;top:986px;font-size:13px;line-height:15px;color:#d8d8d8">Zoom</div>
<div class="a" style="left:572px;top:981px;width:23px;height:16px;background:#4d4d4d"></div>
<svg style="left:580px;top:986px" width="8" height="10" viewBox="0 0 8 10"><path d="M0 0 L8 5 L0 10 Z" fill="#d8d8d8"/></svg>

<!-- RIGHT DOCK -->
<div class="a" style="left:1323px;top:85px;width:2px;height:911px;background:#3c3c3c"></div>
<div class="a" style="left:1325px;top:85px;width:47px;height:14px;background:#454545"></div><div class="a" style="left:1325px;top:99px;width:47px;height:1px;background:#363636"></div>
<svg style="left:1356px;top:90px" width="8" height="5" viewBox="0 0 8 5"><path d="M3 0 L0 2.5 L3 5 Z M7 0 L4 2.5 L7 5 Z" fill="#d8d8d8"/></svg>
<div class="a" style="left:1325px;top:150px;width:47px;height:2px;background:#3e3e3e"></div>
<div class="a" style="left:1325px;top:202px;width:47px;height:2px;background:#3e3e3e"></div>
<div class="a" style="left:1325px;top:288px;width:47px;height:2px;background:#3e3e3e"></div>
<div class="a" style="left:1325px;top:339px;width:47px;height:2px;background:#3e3e3e"></div>
<div class="a" style="left:1325px;top:460px;width:47px;height:2px;background:#3e3e3e"></div>
<div class="a" style="left:1325px;top:547px;width:47px;height:2px;background:#3e3e3e"></div>
<div class="a" style="left:1325px;top:598px;width:47px;height:2px;background:#3e3e3e"></div>
<div class="a" style="left:1325px;top:649px;width:47px;height:2px;background:#3e3e3e"></div>
<div class="a" style="left:1325px;top:700px;width:47px;height:2px;background:#3e3e3e"></div>
<div class="a" style="left:1325px;top:752px;width:47px;height:2px;background:#3e3e3e"></div>
<svg style="left:1337px;top:104px" width="25" height="5" viewBox="0 0 25 5"><g fill="#363636"><rect x="0.00" y="0" width="1.1" height="5"/><rect x="2.45" y="0" width="1.1" height="5"/><rect x="4.90" y="0" width="1.1" height="5"/><rect x="7.35" y="0" width="1.1" height="5"/><rect x="9.80" y="0" width="1.1" height="5"/><rect x="12.25" y="0" width="1.1" height="5"/><rect x="14.70" y="0" width="1.1" height="5"/><rect x="17.15" y="0" width="1.1" height="5"/><rect x="19.60" y="0" width="1.1" height="5"/><rect x="22.05" y="0" width="1.1" height="5"/></g></svg>
<svg style="left:1337px;top:156px" width="25" height="5" viewBox="0 0 25 5"><g fill="#363636"><rect x="0.00" y="0" width="1.1" height="5"/><rect x="2.45" y="0" width="1.1" height="5"/><rect x="4.90" y="0" width="1.1" height="5"/><rect x="7.35" y="0" width="1.1" height="5"/><rect x="9.80" y="0" width="1.1" height="5"/><rect x="12.25" y="0" width="1.1" height="5"/><rect x="14.70" y="0" width="1.1" height="5"/><rect x="17.15" y="0" width="1.1" height="5"/><rect x="19.60" y="0" width="1.1" height="5"/><rect x="22.05" y="0" width="1.1" height="5"/></g></svg>
<svg style="left:1337px;top:207px" width="25" height="5" viewBox="0 0 25 5"><g fill="#363636"><rect x="0.00" y="0" width="1.1" height="5"/><rect x="2.45" y="0" width="1.1" height="5"/><rect x="4.90" y="0" width="1.1" height="5"/><rect x="7.35" y="0" width="1.1" height="5"/><rect x="9.80" y="0" width="1.1" height="5"/><rect x="12.25" y="0" width="1.1" height="5"/><rect x="14.70" y="0" width="1.1" height="5"/><rect x="17.15" y="0" width="1.1" height="5"/><rect x="19.60" y="0" width="1.1" height="5"/><rect x="22.05" y="0" width="1.1" height="5"/></g></svg>
<svg style="left:1337px;top:294px" width="25" height="5" viewBox="0 0 25 5"><g fill="#363636"><rect x="0.00" y="0" width="1.1" height="5"/><rect x="2.45" y="0" width="1.1" height="5"/><rect x="4.90" y="0" width="1.1" height="5"/><rect x="7.35" y="0" width="1.1" height="5"/><rect x="9.80" y="0" width="1.1" height="5"/><rect x="12.25" y="0" width="1.1" height="5"/><rect x="14.70" y="0" width="1.1" height="5"/><rect x="17.15" y="0" width="1.1" height="5"/><rect x="19.60" y="0" width="1.1" height="5"/><rect x="22.05" y="0" width="1.1" height="5"/></g></svg>
<svg style="left:1337px;top:345px" width="25" height="5" viewBox="0 0 25 5"><g fill="#363636"><rect x="0.00" y="0" width="1.1" height="5"/><rect x="2.45" y="0" width="1.1" height="5"/><rect x="4.90" y="0" width="1.1" height="5"/><rect x="7.35" y="0" width="1.1" height="5"/><rect x="9.80" y="0" width="1.1" height="5"/><rect x="12.25" y="0" width="1.1" height="5"/><rect x="14.70" y="0" width="1.1" height="5"/><rect x="17.15" y="0" width="1.1" height="5"/><rect x="19.60" y="0" width="1.1" height="5"/><rect x="22.05" y="0" width="1.1" height="5"/></g></svg>
<svg style="left:1337px;top:466px" width="25" height="5" viewBox="0 0 25 5"><g fill="#363636"><rect x="0.00" y="0" width="1.1" height="5"/><rect x="2.45" y="0" width="1.1" height="5"/><rect x="4.90" y="0" width="1.1" height="5"/><rect x="7.35" y="0" width="1.1" height="5"/><rect x="9.80" y="0" width="1.1" height="5"/><rect x="12.25" y="0" width="1.1" height="5"/><rect x="14.70" y="0" width="1.1" height="5"/><rect x="17.15" y="0" width="1.1" height="5"/><rect x="19.60" y="0" width="1.1" height="5"/><rect x="22.05" y="0" width="1.1" height="5"/></g></svg>
<svg style="left:1337px;top:553px" width="25" height="5" viewBox="0 0 25 5"><g fill="#363636"><rect x="0.00" y="0" width="1.1" height="5"/><rect x="2.45" y="0" width="1.1" height="5"/><rect x="4.90" y="0" width="1.1" height="5"/><rect x="7.35" y="0" width="1.1" height="5"/><rect x="9.80" y="0" width="1.1" height="5"/><rect x="12.25" y="0" width="1.1" height="5"/><rect x="14.70" y="0" width="1.1" height="5"/><rect x="17.15" y="0" width="1.1" height="5"/><rect x="19.60" y="0" width="1.1" height="5"/><rect x="22.05" y="0" width="1.1" height="5"/></g></svg>
<svg style="left:1337px;top:604px" width="25" height="5" viewBox="0 0 25 5"><g fill="#363636"><rect x="0.00" y="0" width="1.1" height="5"/><rect x="2.45" y="0" width="1.1" height="5"/><rect x="4.90" y="0" width="1.1" height="5"/><rect x="7.35" y="0" width="1.1" height="5"/><rect x="9.80" y="0" width="1.1" height="5"/><rect x="12.25" y="0" width="1.1" height="5"/><rect x="14.70" y="0" width="1.1" height="5"/><rect x="17.15" y="0" width="1.1" height="5"/><rect x="19.60" y="0" width="1.1" height="5"/><rect x="22.05" y="0" width="1.1" height="5"/></g></svg>
<svg style="left:1337px;top:655px" width="25" height="5" viewBox="0 0 25 5"><g fill="#363636"><rect x="0.00" y="0" width="1.1" height="5"/><rect x="2.45" y="0" width="1.1" height="5"/><rect x="4.90" y="0" width="1.1" height="5"/><rect x="7.35" y="0" width="1.1" height="5"/><rect x="9.80" y="0" width="1.1" height="5"/><rect x="12.25" y="0" width="1.1" height="5"/><rect x="14.70" y="0" width="1.1" height="5"/><rect x="17.15" y="0" width="1.1" height="5"/><rect x="19.60" y="0" width="1.1" height="5"/><rect x="22.05" y="0" width="1.1" height="5"/></g></svg>
<svg style="left:1337px;top:706px" width="25" height="5" viewBox="0 0 25 5"><g fill="#363636"><rect x="0.00" y="0" width="1.1" height="5"/><rect x="2.45" y="0" width="1.1" height="5"/><rect x="4.90" y="0" width="1.1" height="5"/><rect x="7.35" y="0" width="1.1" height="5"/><rect x="9.80" y="0" width="1.1" height="5"/><rect x="12.25" y="0" width="1.1" height="5"/><rect x="14.70" y="0" width="1.1" height="5"/><rect x="17.15" y="0" width="1.1" height="5"/><rect x="19.60" y="0" width="1.1" height="5"/><rect x="22.05" y="0" width="1.1" height="5"/></g></svg>

<svg style="left:1339px;top:116px" width="22" height="26" viewBox="0 0 22 26"><rect x="5" y="17" width="11" height="8.5" rx="0.6" fill="#cbcbcb"/><path d="M10 17.5 L9.3 8" stroke="#cbcbcb" stroke-width="1.8"/><circle cx="9.3" cy="6" r="2.7" fill="#cbcbcb"/><rect x="8" y="0.5" width="2.6" height="3.5" fill="#cbcbcb"/><path d="M7 17.5 L4.5 12" stroke="#cbcbcb" stroke-width="1.6"/><ellipse cx="3.6" cy="8.6" rx="2.3" ry="4.2" transform="rotate(-25 3.6 8.6)" fill="#cbcbcb"/><path d="M13.5 17.5 L16 10.5" stroke="#cbcbcb" stroke-width="1.6"/><path d="M12.5 8 Q16.5 4.5 20.8 7.5 Q21.5 9.5 20.8 11.3 L15 11.3 Z" fill="#cbcbcb"/></svg>
<svg style="left:1339px;top:173px" width="21" height="16" viewBox="0 0 21 16"><rect x="0" y="0" width="21" height="2" fill="#cbcbcb"/><rect x="0" y="6" width="21" height="3" fill="#cbcbcb"/><rect x="0" y="12" width="21" height="4" fill="#cbcbcb"/></svg>
<svg style="left:1339px;top:223px" width="20" height="20" viewBox="0 0 20 20"><circle cx="10" cy="10" r="10" fill="#cbcbcb"/><circle cx="10" cy="5" r="1.8" fill="#535353"/><path d="M7.5 8.5 L11.5 8.5 L11.5 14.5 L13 14.5 L13 16 L7.5 16 L7.5 14.5 L9 14.5 L9 10 L7.5 10 Z" fill="#535353"/></svg>
<svg style="left:1339px;top:256px" width="21" height="21" viewBox="0 0 21 21"><path d="M7 4 L21 4 L21 21 L1 21 L1 10 Q3 14 7 14 A6 6 0 0 0 13 8 Q13 5 11 4 Z" fill="#cbcbcb"/><circle cx="5" cy="5" r="4.5" fill="#cbcbcb"/></svg>
<svg style="left:1339px;top:310px" width="21" height="16" viewBox="0 0 21 16"><defs><linearGradient id="g3" x1="0" x2="1"><stop offset="0" stop-color="#1a1a1a"/><stop offset="0.85" stop-color="#e8e8e8"/></linearGradient></defs><rect x="1" y="1" width="19" height="14" fill="url(#g3)" stroke="#cbcbcb" stroke-width="1.6"/></svg>
<svg style="left:1340px;top:360px" width="20" height="19" viewBox="0 0 20 19"><rect x="2" y="2" width="15" height="15" stroke="#cbcbcb" stroke-width="1.6" fill="none"/><g fill="#cbcbcb"><rect x="0" y="0" width="4.5" height="4.5"/><rect x="14.5" y="0" width="4.5" height="4.5"/><rect x="0" y="14.5" width="4.5" height="4.5"/><rect x="14.5" y="14.5" width="4.5" height="4.5"/><rect x="7.3" y="0" width="4.5" height="4"/><rect x="7.3" y="15" width="4.5" height="4"/><rect x="0" y="7.3" width="4" height="4.5"/><rect x="15" y="7.3" width="4" height="4.5"/><rect x="8.6" y="8.6" width="1.8" height="1.8"/></g></svg>
<svg style="left:1340px;top:390px" width="20" height="26" viewBox="0 0 20 26"><rect x="0" y="0" width="1.3" height="25.5" fill="#cbcbcb"/><rect x="3" y="6.5" width="9.6" height="7" fill="#cbcbcb"/><rect x="3" y="16.7" width="15.6" height="6" fill="#cbcbcb"/></svg>
<svg style="left:1340px;top:430px" width="20" height="20" viewBox="0 0 20 20"><rect x="0" y="0" width="11.5" height="11.3" fill="#cbcbcb"/><rect x="6" y="5.7" width="12.6" height="13.1" fill="#cbcbcb"/><rect x="6.5" y="6.2" width="5" height="5" fill="#a8a8a8" stroke="#6a6a6a" stroke-width="1"/></svg>
<svg style="left:1339px;top:484px" width="20" height="15" viewBox="0 0 20 15"><rect x="0" y="0" width="20" height="15" fill="#cbcbcb"/><g fill="#8a8a8a"><rect x="1" y="1" width="5.5" height="6"/><rect x="7.5" y="1" width="5" height="6"/><rect x="13.5" y="1" width="5.5" height="6"/><rect x="1" y="8" width="5.5" height="6"/><rect x="7.5" y="8" width="5" height="6"/><rect x="13.5" y="8" width="5.5" height="6"/></g></svg>
<svg style="left:1339px;top:517px" width="20" height="20" viewBox="0 0 20 20"><path d="M1 1 A19 19 0 0 1 19.5 19.5 L1 19.5 Z" fill="#8a8a8a" stroke="#cbcbcb" stroke-width="1.4"/><path d="M2 2 L18 18 L2 18 Z" fill="#555"/><path d="M2 2 L6 18 L2 18 Z" fill="#222"/><path d="M10 15 Q14 13 18 16 L18 18 L8 18 Z" fill="#e0e0e0"/></svg>
<svg style="left:1339px;top:566px" width="20" height="23" viewBox="0 0 20 23"><path d="M0 0 L14 0 L20 6 L20 23 L0 23 Z" fill="#cbcbcb"/><path d="M14 0 L14 6 L20 6" fill="#8a8a8a"/><circle cx="9" cy="14" r="5.5" fill="#474747"/><rect x="8" y="12.5" width="2" height="5" fill="#cbcbcb"/><circle cx="9" cy="10.5" r="1.1" fill="#cbcbcb"/></svg>
<svg style="left:1339px;top:618px" width="21" height="22" viewBox="0 0 21 22"><path d="M10.5 0 L21 7 L10.5 14 L0 7 Z" fill="#cbcbcb"/><path d="M0 13 L3 11 L10.5 16 L18 11 L21 13 L10.5 21 Z" fill="#cbcbcb"/></svg>
<svg style="left:1338px;top:668px" width="23" height="24" viewBox="0 0 23 24"><circle cx="8.5" cy="9" r="8.5" fill="#cbcbcb"/><circle cx="13.5" cy="14.5" r="8" fill="#7a7a7a" stroke="#cbcbcb" stroke-width="1.6"/></svg>
<svg style="left:1338px;top:721px" width="23" height="19" viewBox="0 0 23 19"><path d="M11 0.5 Q22 0.5 22.5 8 Q23 13 17 14.5 Q14 15.5 11 18 Q7 19.5 3 17.5 Q-1 14 1.5 9 Q3 5 5 6 Q8 7 6 3 Q7 0.5 11 0.5 Z" fill="#cbcbcb"/><g fill="#535353"><circle cx="5" cy="13" r="1.8"/><circle cx="9.5" cy="15" r="1.8"/><circle cx="14" cy="13" r="1.6"/><circle cx="18" cy="10" r="1.5"/><circle cx="19" cy="6" r="1.3"/></g></svg>
</body></html>
